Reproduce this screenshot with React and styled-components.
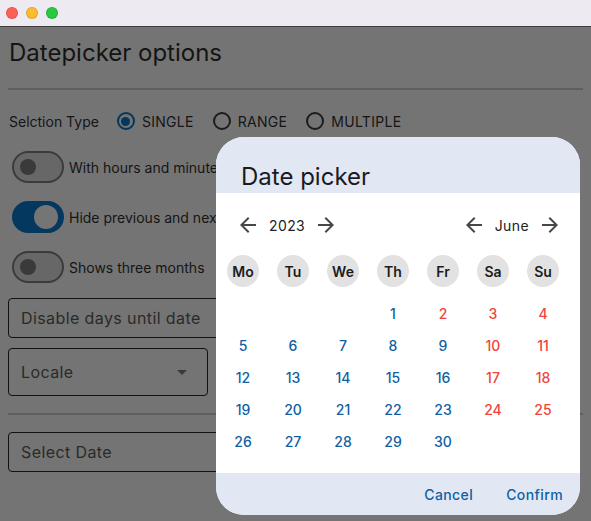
import React from "react";
import styled, { createGlobalStyle } from "styled-components";

const GlobalStyle = createGlobalStyle`
  html, body { margin: 0; padding: 0; }
  body { font-family: Inter, "Noto Sans", "Liberation Sans", sans-serif; background: #747474; }
  * { box-sizing: border-box; }
`;

const Window = styled.div`
  width: 591px;
  height: 521px;
  display: flex;
  flex-direction: column;
  position: relative;
  overflow: hidden;
`;

const TitleBar = styled.div`
  height: 27px;
  flex: none;
  background: #edebf1;
  border-bottom: 1px solid #3d3d3d;
  display: flex;
  align-items: center;
  gap: 8px;
  padding-left: 6px;
`;

const Light = styled.span`
  width: 12px;
  height: 12px;
  border-radius: 50%;
  background: ${(p) => p.$c};
  border: 0.5px solid rgba(0, 0, 0, 0.12);
`;

const Page = styled.div`
  flex: 1;
  background: #747474;
  padding: 0 8px;
  display: flex;
  flex-direction: column;
  color: #151515;
`;

const Heading = styled.h1`
  margin: 12px 0 0 1px;
  font-size: 24px;
  line-height: 28px;
  font-weight: 400;
  color: #141414;
`;

const Divider = styled.div`
  height: 2px;
  background: #5f5f5f;
  margin: ${(p) => p.$m};
`;

const RadioRow = styled.div`
  display: flex;
  align-items: center;
  height: 24px;
  margin: 19px 0 0 1px;
  font-size: 14px;
`;

const RowLabel = styled.span`
  margin-right: 18px;
`;

const RadioOption = styled.label`
  display: flex;
  align-items: center;
  gap: 7px;
  margin-right: 19px;
  letter-spacing: 0.3px;
`;

const RadioCircle = styled.span`
  width: 18px;
  height: 18px;
  border-radius: 50%;
  border: 2px solid ${(p) => (p.$on ? "#05375c" : "#1c1c1c")};
  display: flex;
  align-items: center;
  justify-content: center;
  &::after {
    content: "";
    width: 9px;
    height: 9px;
    border-radius: 50%;
    background: ${(p) => (p.$on ? "#05375c" : "transparent")};
  }
`;

const SwitchList = styled.div`
  display: flex;
  flex-direction: column;
  gap: 18px;
  margin: 18px 0 0 4px;
`;

const SwitchRow = styled.div`
  display: flex;
  align-items: center;
  gap: 5px;
  font-size: 14px;
  height: 32px;
`;

const Track = styled.span`
  width: 52px;
  height: 32px;
  border-radius: 16px;
  flex: none;
  display: flex;
  align-items: center;
  justify-content: ${(p) => (p.$on ? "flex-end" : "flex-start")};
  padding: 0 ${(p) => (p.$on ? "4px" : "6px")};
  border: 2px solid ${(p) => (p.$on ? "#04385e" : "#3b3b3b")};
  background: ${(p) => (p.$on ? "#04385e" : "#676767")};
`;

const Thumb = styled.span`
  width: ${(p) => (p.$on ? "24px" : "16px")};
  height: ${(p) => (p.$on ? "24px" : "16px")};
  border-radius: 50%;
  background: ${(p) => (p.$on ? "#757575" : "#3a3a3a")};
`;

const Field = styled.div`
  height: ${(p) => p.$h}px;
  width: ${(p) => p.$w};
  margin-top: ${(p) => p.$mt}px;
  border: 1px solid #121212;
  border-radius: 4px;
  display: flex;
  align-items: center;
  justify-content: space-between;
  padding: 0 20px 0 12px;
  font-size: 16px;
  color: #2a2a2a;
  letter-spacing: 0.4px;
`;

const Caret = styled.span`
  width: 0;
  height: 0;
  border-left: 5px solid transparent;
  border-right: 5px solid transparent;
  border-top: 5px solid #3a3a3a;
`;

const Dialog = styled.div`
  position: absolute;
  left: 216px;
  top: 137px;
  width: 364px;
  height: 378px;
  border-radius: 28px;
  overflow: hidden;
  background: #ffffff;
  display: flex;
  flex-direction: column;
`;

const DialogHeader = styled.div`
  height: 56px;
  background: #e1e8f3;
  display: flex;
  align-items: flex-end;
  padding: 0 0 1px 25px;
`;

const DialogTitle = styled.h2`
  margin: 0;
  font-size: 24px;
  line-height: 30px;
  font-weight: 400;
  color: #1b1b1f;
`;

const DialogBody = styled.div`
  flex: 1;
  padding: 20px 0 0 2px;
`;

const NavRow = styled.div`
  display: flex;
  justify-content: space-between;
  align-items: center;
  height: 24px;
  padding: 0 18px 0 18px;
`;

const NavGroup = styled.div`
  display: flex;
  align-items: center;
  gap: 9px;
  font-size: 14px;
  color: #222;
  letter-spacing: 0.4px;
`;

const IconBtn = styled.span`
  width: 24px;
  height: 24px;
  display: flex;
  color: #45474b;
`;

const Grid = styled.div`
  display: grid;
  grid-template-columns: repeat(7, 50px);
  grid-auto-rows: 32px;
  margin-top: ${(p) => p.$mt}px;
  justify-items: center;
  align-items: center;
`;

const WeekDay = styled.span`
  width: 32px;
  height: 32px;
  border-radius: 50%;
  background: #e2e2e2;
  display: flex;
  align-items: center;
  justify-content: center;
  font-size: 14px;
  font-weight: 600;
  color: #1c1c1c;
`;

const Day = styled.span`
  font-size: 14px;
  font-weight: 500;
  color: ${(p) => (p.$red ? "#f0443a" : "#0f5fa4")};
`;

const Footer = styled.div`
  height: 42px;
  background: #e1e8f3;
  display: flex;
  justify-content: flex-end;
  align-items: center;
  gap: 33px;
  padding-right: 17px;
`;

const TextButton = styled.button`
  border: none;
  background: none;
  padding: 0;
  font-family: inherit;
  font-size: 14px;
  font-weight: 500;
  color: #0f5fa4;
  letter-spacing: 0.4px;
`;

const Arrow = ({ dir }) => (
  <svg width="24" height="24" viewBox="0 0 24 24" fill="currentColor" style={dir === "right" ? { transform: "scaleX(-1)" } : undefined}>
    <path d="M20 11H7.83l5.59-5.59L12 4l-8 8 8 8 1.41-1.41L7.83 13H20v-2z" />
  </svg>
);

const weekDays = ["Mo", "Tu", "We", "Th", "Fr", "Sa", "Su"];
const redDays = new Set([2, 3, 4, 10, 11, 17, 18, 24, 25]);

export default function App() {
  const cells = [];
  for (let i = 0; i < 3; i++) cells.push(<span key={"e" + i} />);
  for (let d = 1; d <= 30; d++) cells.push(<Day key={d} $red={redDays.has(d)}>{d}</Day>);

  return (
    <>
      <GlobalStyle />
      <Window>
        <TitleBar>
          <Light $c="#fe5f57" />
          <Light $c="#febc2e" />
          <Light $c="#28c840" />
        </TitleBar>
        <Page>
          <Heading>Datepicker options</Heading>
          <Divider $m="21px 0 0 0" />
          <RadioRow>
            <RowLabel>Selction Type</RowLabel>
            <RadioOption><RadioCircle $on />SINGLE</RadioOption>
            <RadioOption><RadioCircle />RANGE</RadioOption>
            <RadioOption><RadioCircle />MULTIPLE</RadioOption>
          </RadioRow>
          <SwitchList>
            <SwitchRow><Track><Thumb /></Track>With hours and minutes</SwitchRow>
            <SwitchRow><Track $on><Thumb $on /></Track>Hide previous and next days</SwitchRow>
            <SwitchRow><Track><Thumb /></Track>Shows three months</SwitchRow>
          </SwitchList>
          <Field $h={40} $w="560px" $mt={15}>Disable days until date</Field>
          <Field $h={48} $w="200px" $mt={10}>Locale<Caret /></Field>
          <Divider $m="17px 0 0 0" />
          <Field $h={40} $w="560px" $mt={17}>Select Date</Field>
        </Page>
        <Dialog>
          <DialogHeader>
            <DialogTitle>Date picker</DialogTitle>
          </DialogHeader>
          <DialogBody>
            <NavRow>
              <NavGroup>
                <IconBtn><Arrow /></IconBtn>
                2023
                <IconBtn><Arrow dir="right" /></IconBtn>
              </NavGroup>
              <NavGroup>
                <IconBtn><Arrow /></IconBtn>
                June
                <IconBtn><Arrow dir="right" /></IconBtn>
              </NavGroup>
            </NavRow>
            <Grid $mt={18}>
              {weekDays.map((w) => <WeekDay key={w}>{w}</WeekDay>)}
            </Grid>
            <Grid $mt={10}>{cells}</Grid>
          </DialogBody>
          <Footer>
            <TextButton>Cancel</TextButton>
            <TextButton>Confirm</TextButton>
          </Footer>
        </Dialog>
      </Window>
    </>
  );
}
